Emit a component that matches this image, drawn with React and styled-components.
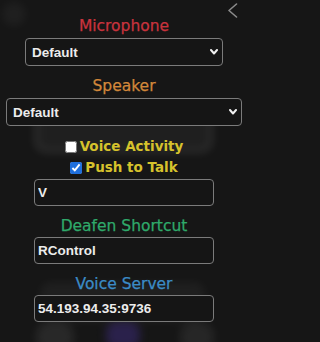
import React from 'react';
import styled, { createGlobalStyle } from 'styled-components';

const GlobalStyle = createGlobalStyle`
  html, body { margin: 0; padding: 0; background: #161616; }
  body { width: 247px; height: 342px; overflow: hidden; }
  * { box-sizing: border-box; }
`;

const Panel = styled.div`
  position: relative;
  width: 247px;
  height: 342px;
  overflow: hidden;
  background: #161616;
  font-family: "DejaVu Sans", Verdana, sans-serif;
`;

const Backdrop = styled.div`
  position: absolute;
  inset: 0;
  pointer-events: none;
  filter: blur(4px);
`;

const Ghost = styled.div`
  position: absolute;
  left: ${p => p.$x}px;
  top: ${p => p.$y}px;
  width: ${p => p.$w}px;
  height: ${p => p.$h}px;
  border-radius: ${p => p.$r}px;
  background: ${p => p.$bg};
  border: ${p => p.$border || 'none'};
`;

const Content = styled.div`
  position: relative;
  display: flex;
  flex-direction: column;
  align-items: center;
  padding: 17px 0 0 1px;
`;

const BackButton = styled.button`
  position: absolute;
  top: 3px;
  right: 9px;
  width: 12px;
  height: 15px;
  padding: 0;
  border: none;
  background: transparent;
  display: flex;
  align-items: center;
  justify-content: center;
  cursor: pointer;
`;

const Field = styled.div`
  display: flex;
  flex-direction: column;
  align-items: center;
  gap: ${p => p.$gap}px;
  margin-top: ${p => p.$mt || 0}px;
`;

const Label = styled.div`
  font-size: 15.5px;
  line-height: 18px;
  color: ${p => p.$color};
  -webkit-text-stroke: 0.25px ${p => p.$color};
  white-space: nowrap;
`;

const SelectWrap = styled.div`
  position: relative;
  width: ${p => p.$w}px;
  height: 28px;
`;

const Select = styled.select`
  appearance: none;
  -webkit-appearance: none;
  width: 100%;
  height: 100%;
  margin: 0;
  background: #151515;
  border: 1px solid #7b7b7b;
  border-radius: 4px;
  color: #ececec;
  font: bold 13.5px "Liberation Sans", Arial, sans-serif;
  padding: 0 22px 0 6px;
  outline: none;
`;

const Caret = styled.svg`
  position: absolute;
  right: 5px;
  top: 50%;
  margin-top: -3px;
  pointer-events: none;
`;

const TextInput = styled.input`
  width: 180px;
  height: 27px;
  margin: 0;
  margin-top: ${p => p.$mt || 0}px;
  background: #151515;
  border: 1px solid #7b7b7b;
  border-radius: 4px;
  color: #ececec;
  font: bold 13.5px "Liberation Sans", Arial, sans-serif;
  padding: 0 3px;
  outline: none;
`;

const Checks = styled.div`
  display: flex;
  flex-direction: column;
  align-items: center;
  gap: 1px;
  margin-top: 10px;
`;

const CheckRow = styled.label`
  display: flex;
  align-items: center;
  height: 20px;
  font-weight: bold;
  font-size: 13.5px;
  line-height: 20px;
  color: #d6c22c;
  white-space: nowrap;
  cursor: pointer;
`;

const Check = styled.input`
  width: 12px;
  height: 12px;
  margin: 0 3px 0 0;
  position: relative;
  top: 1px;
  accent-color: #1f6fdc;
`;

const ChevronDown = () => (
  <Caret width="8" height="6" viewBox="0 0 8 6">
    <polyline points="1,1 4,4.5 7,1" fill="none" stroke="#f0f0f0" strokeWidth="2" strokeLinecap="round" strokeLinejoin="round" />
  </Caret>
);

export default function App() {
  return (
    <>
      <GlobalStyle />
      <Panel>
        <Backdrop>
          <Ghost $x={2} $y={2} $w={24} $h={24} $r={12} $bg="rgba(255,255,255,0.04)" />
          <Ghost $x={35} $y={108} $w={177} $h={44} $r={10} $bg="rgba(255,255,255,0.04)" $border="4px solid rgba(255,255,255,0.09)" />
          <Ghost $x={40} $y={282} $w={165} $h={40} $r={10} $bg="rgba(255,255,255,0.04)" />
          <Ghost $x={36} $y={322} $w={38} $h={30} $r={14} $bg="rgba(255,255,255,0.08)" />
          <Ghost $x={106} $y={322} $w={34} $h={26} $r={10} $bg="rgba(90,60,200,0.3)" />
          <Ghost $x={180} $y={322} $w={34} $h={30} $r={14} $bg="rgba(255,255,255,0.07)" />
        </Backdrop>
        <BackButton aria-label="Back">
          <svg width="11" height="15" viewBox="0 0 11 15">
            <polyline points="9.5,1 2,7.5 9.5,14" fill="none" stroke="#8a8a8a" strokeWidth="1.6" strokeLinecap="round" strokeLinejoin="round" />
          </svg>
        </BackButton>
        <Content>
          <Field $gap={3}>
            <Label $color="#c8333d">Microphone</Label>
            <SelectWrap $w={198}>
              <Select defaultValue="Default">
                <option>Default</option>
              </Select>
              <ChevronDown />
            </SelectWrap>
          </Field>
          <Field $gap={3} $mt={11}>
            <Label $color="#d2873a">Speaker</Label>
            <SelectWrap $w={236}>
              <Select defaultValue="Default">
                <option>Default</option>
              </Select>
              <ChevronDown />
            </SelectWrap>
          </Field>
          <Checks>
            <CheckRow>
              <Check type="checkbox" />
              Voice Activity
            </CheckRow>
            <CheckRow>
              <Check type="checkbox" defaultChecked />
              Push to Talk
            </CheckRow>
          </Checks>
          <TextInput $mt={2} defaultValue="V" />
          <Field $gap={2} $mt={11}>
            <Label $color="#2fa96a">Deafen Shortcut</Label>
            <TextInput defaultValue="RControl" />
          </Field>
          <Field $gap={2} $mt={11}>
            <Label $color="#3b8bc6">Voice Server</Label>
            <TextInput defaultValue="54.193.94.35:9736" />
          </Field>
        </Content>
      </Panel>
    </>
  );
}
